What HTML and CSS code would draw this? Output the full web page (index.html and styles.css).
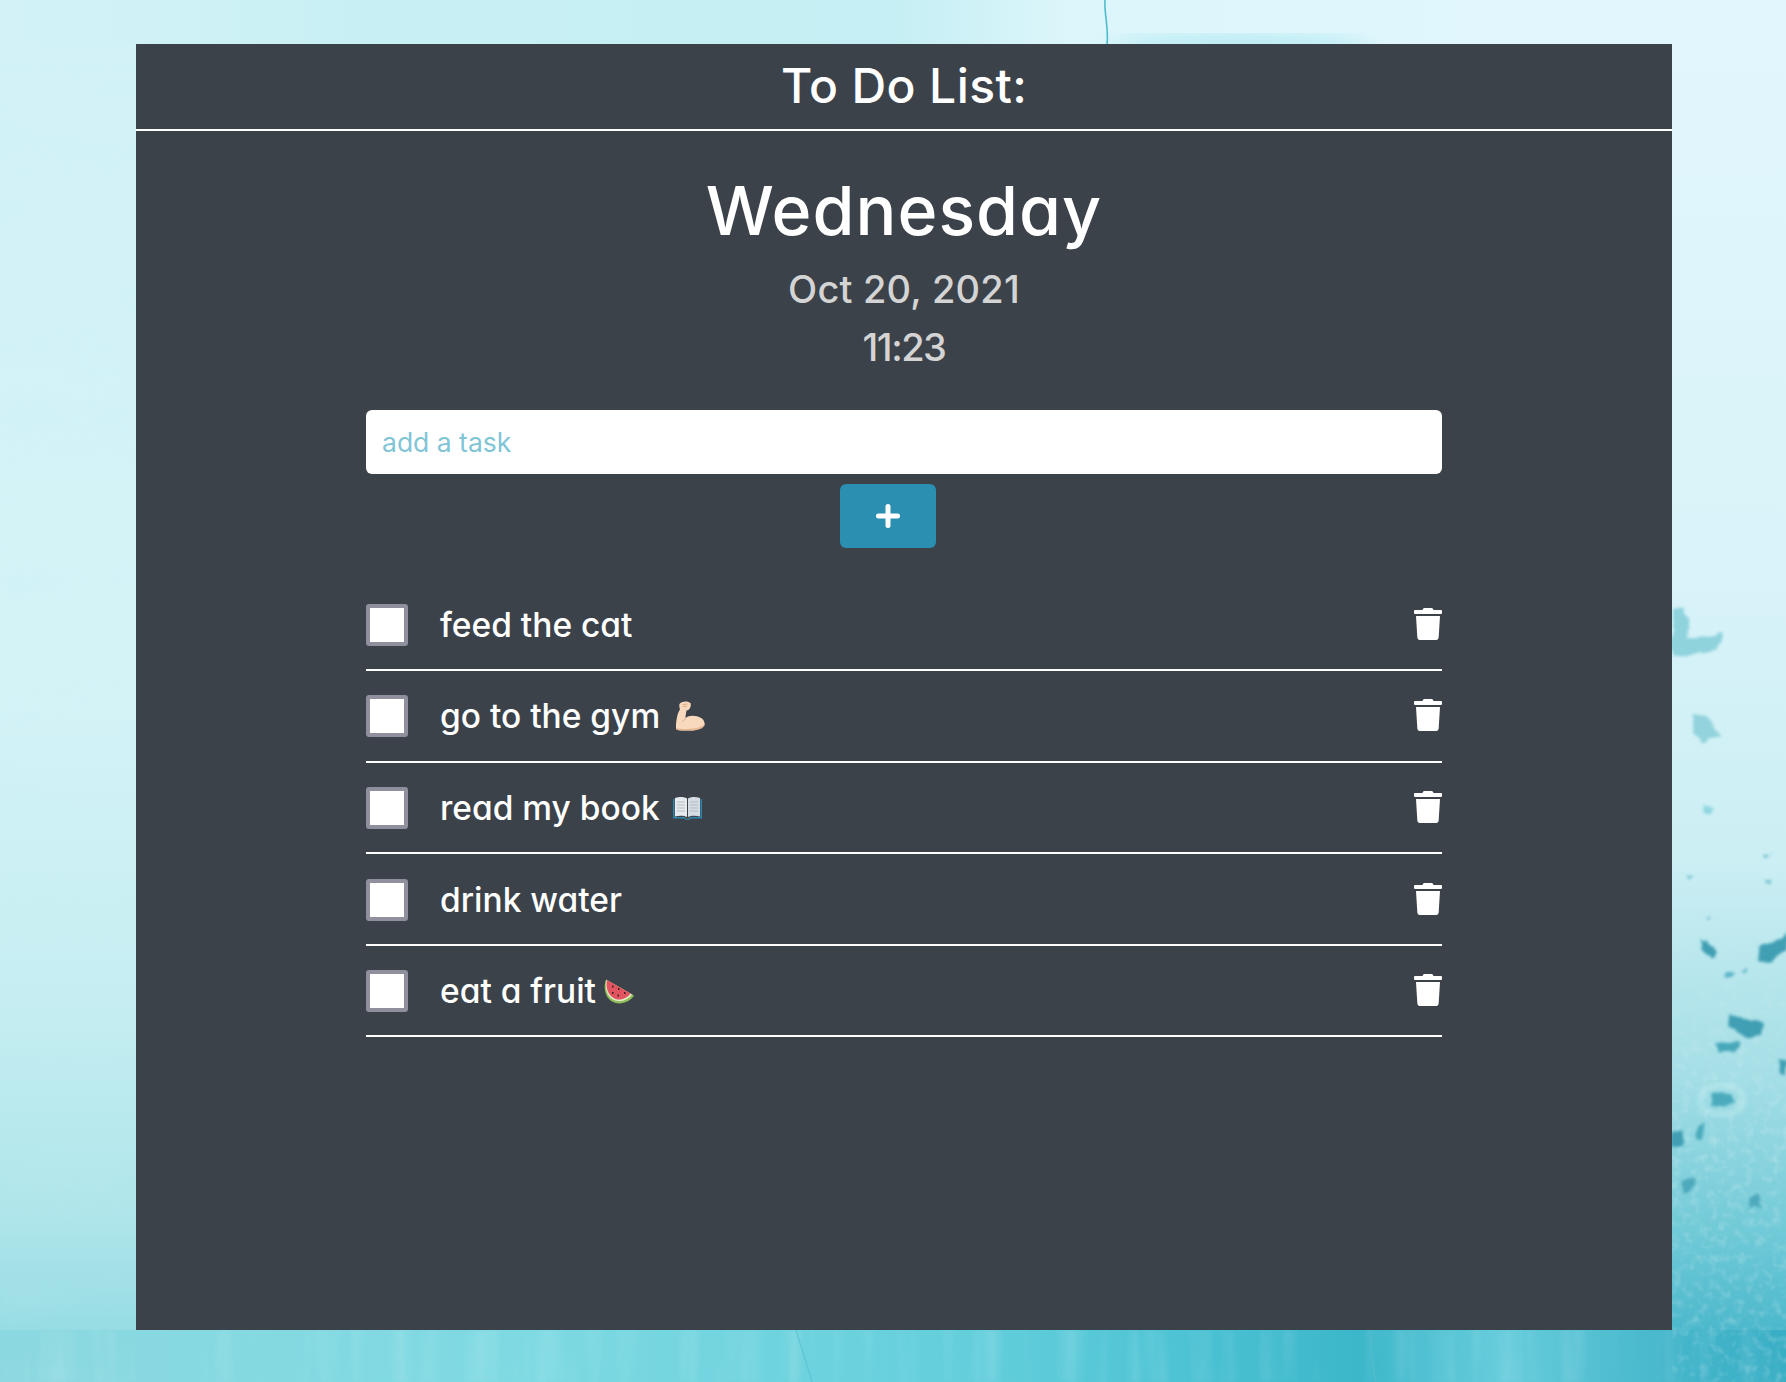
FILE: index.html
```html
<!DOCTYPE html>
<html lang="en">
<head>
<meta charset="utf-8">
<title>To Do List</title>
<link rel="stylesheet" href="styles.css">
</head>
<body>
<svg class="backdrop" viewBox="0 0 1786 1382" preserveAspectRatio="none" aria-hidden="true">
  <defs>
    <linearGradient id="base" x1="0" y1="0" x2="0" y2="1">
      <stop offset="0" stop-color="#d2f2f7"/>
      <stop offset="0.5" stop-color="#d4f3f7"/>
      <stop offset="0.72" stop-color="#c6eef2"/>
      <stop offset="0.88" stop-color="#aee5ea"/>
      <stop offset="1" stop-color="#8cd8e0"/>
    </linearGradient>
    <linearGradient id="rightFade" x1="0" y1="0" x2="0" y2="1">
      <stop offset="0" stop-color="#e2f7fd"/>
      <stop offset="0.42" stop-color="#d8f3f9"/>
      <stop offset="0.62" stop-color="#cceff4"/>
      <stop offset="0.78" stop-color="#a4dee6"/>
      <stop offset="0.9" stop-color="#6cc8d6"/>
      <stop offset="1" stop-color="#38aec5"/>
    </linearGradient>
    <linearGradient id="bottomBand" x1="0" y1="0" x2="1" y2="0">
      <stop offset="0" stop-color="#8cd8e0"/>
      <stop offset="0.3" stop-color="#7dd9e2"/>
      <stop offset="0.55" stop-color="#63cedb"/>
      <stop offset="0.66" stop-color="#4dc3d4"/>
      <stop offset="0.76" stop-color="#3cb6ca"/>
      <stop offset="0.84" stop-color="#66ccdb"/>
      <stop offset="0.936" stop-color="#45b6cb"/>
      <stop offset="1" stop-color="#38aec5"/>
    </linearGradient>
    <linearGradient id="topBand" x1="0" y1="0" x2="1" y2="0">
      <stop offset="0" stop-color="#d2f2f7"/>
      <stop offset="0.08" stop-color="#d0f2f6"/>
      <stop offset="0.2" stop-color="#c8f0f4"/>
      <stop offset="0.5" stop-color="#c5eff4"/>
      <stop offset="0.6" stop-color="#dcf6fb"/>
      <stop offset="0.936" stop-color="#e2f7fd"/>
      <stop offset="1" stop-color="#e2f7fd"/>
    </linearGradient>
    <linearGradient id="fadeUp" x1="0" y1="0" x2="0" y2="1">
      <stop offset="0" stop-color="#000"/>
      <stop offset="0.5" stop-color="#fff"/>
      <stop offset="1" stop-color="#fff"/>
    </linearGradient>
    <mask id="fadeMaskRight" maskUnits="userSpaceOnUse" x="1672" y="900" width="114" height="482">
      <rect x="1672" y="900" width="114" height="482" fill="url(#fadeUp)"/>
    </mask>
    <filter id="rough" x="-10%" y="-10%" width="120%" height="120%">
      <feTurbulence type="fractalNoise" baseFrequency="0.06" numOctaves="3" seed="4" result="n"/>
      <feDisplacementMap in="SourceGraphic" in2="n" scale="9" xChannelSelector="R" yChannelSelector="G"/>
      <feGaussianBlur stdDeviation="1.6"/>
    </filter>
    <filter id="streaksV" x="0" y="0" width="100%" height="100%">
      <feTurbulence type="fractalNoise" baseFrequency="0.05 0.004" numOctaves="3" seed="8"/>
      <feColorMatrix values="0 0 0 0 1  0 0 0 0 1  0 0 0 0 1  1.4 0 0 0 -0.6"/>
      <feGaussianBlur stdDeviation="1.5"/>
    </filter>
    <filter id="patchesH" x="0" y="0" width="100%" height="100%">
      <feTurbulence type="fractalNoise" baseFrequency="0.004 0.018" numOctaves="3" seed="12"/>
      <feColorMatrix values="0 0 0 0 0.55  0 0 0 0 0.86  0 0 0 0 0.9  1.4 0 0 0 -0.6"/>
      <feGaussianBlur stdDeviation="3"/>
    </filter>
    <filter id="speckle" x="0" y="0" width="100%" height="100%">
      <feTurbulence type="fractalNoise" baseFrequency="0.11" numOctaves="2" seed="3"/>
      <feColorMatrix values="0 0 0 0 1  0 0 0 0 1  0 0 0 0 1  2.4 0 0 0 -1.1"/>
      <feGaussianBlur stdDeviation="0.7"/>
    </filter>
    <filter id="soft"><feGaussianBlur stdDeviation="12"/></filter>
    <filter id="softer"><feGaussianBlur stdDeviation="2"/></filter>
  </defs>
  <rect width="136" height="1382" fill="url(#base)"/>
  <rect x="1672" width="114" height="1382" fill="url(#rightFade)"/>
  <rect x="0" y="0" width="1786" height="44" fill="url(#topBand)"/>
  <rect x="0" y="1330" width="1786" height="52" fill="url(#bottomBand)"/>
  <rect y="60" width="136" height="1322" filter="url(#patchesH)" opacity="0.22"/>
  <rect x="0" y="1330" width="1786" height="52" filter="url(#streaksV)" opacity="0.22"/>
  <g mask="url(#fadeMaskRight)"><rect x="1672" y="900" width="114" height="482" filter="url(#speckle)" opacity="0.2"/></g>
  <ellipse cx="1240" cy="50" rx="130" ry="14" fill="#a3e4ee" opacity="0.7" filter="url(#soft)"/>
  <path class="crack" d="M1105 0 C1104 14 1109 28 1107 44"/>
  <path class="crack" d="M1370 1330 C1371 1348 1372 1365 1376 1382"/>
  <path class="crack crack-faint" d="M796 1330 C802 1350 808 1368 812 1382"/>
  <g filter="url(#rough)">
    <path fill="#8fd3dd" d="M1672 610 L1684 608 L1690 638 L1722 634 L1716 650 L1690 656 L1672 660Z"/>
    <path fill="#93d3dd" d="M1690 714 L1708 716 L1722 738 L1700 742 L1694 732Z"/>
    <path fill="#8fd6e0" d="M1705 805 L1716 808 L1712 814 L1704 812Z"/>
    <path fill="#3f9fb3" d="M1698 938 L1708 940 L1717 952 L1714 960 L1704 952Z"/>
    <path fill="#3f9fb3" d="M1762 946 L1786 934 L1786 950 L1770 962 L1760 960Z"/>
    <path fill="#3f9fb3" d="M1728 1014 L1744 1020 L1762 1024 L1760 1036 L1744 1038 L1730 1026Z"/>
    <path fill="#46a8ba" d="M1716 1044 L1740 1042 L1736 1052 L1720 1052Z"/>
    <path fill="#4aabbc" d="M1712 1094 L1730 1093 L1735 1102 L1720 1108 L1711 1104Z"/>
    <path fill="#3f9fb3" d="M1673 1130 L1682 1129 L1684 1145 L1673 1149Z"/>
    <path fill="#4aabbc" d="M1693 1134 L1704 1123 L1706 1132 L1696 1139Z"/>
    <path fill="#4ea9bc" d="M1680 1182 L1696 1179 L1694 1188 L1682 1191Z"/>
    <path fill="#4ea9bc" d="M1748 1198 L1758 1196 L1760 1206 L1750 1208Z"/>
    <path fill="#3f9fb3" d="M1778 1058 L1786 1060 L1786 1076 L1780 1072Z"/>
    <path fill="#5ab4c6" d="M1724 974 L1736 972 L1732 978 L1726 978Z"/>
    <path fill="#5ab4c6" d="M1738 970 L1746 966 L1746 972Z"/>
    <path fill="#7cc4d2" d="M1762 880 L1772 880 L1770 886Z"/>
    <path fill="#7cc4d2" d="M1684 874 L1692 876 L1688 880Z"/>
    <path fill="#6db9ca" d="M1706 918 L1712 918 L1710 922Z"/>
    <path fill="#6db9ca" d="M1764 854 L1772 854 L1768 858Z"/>
  </g>
  <ellipse cx="1722" cy="1100" rx="22" ry="15" fill="none" stroke="#c2ecf1" stroke-width="5" opacity="0.5" filter="url(#softer)"/>
</svg>

<main class="panel">
  <header class="panel-header">
    <h1 class="title">To Do List:</h1>
  </header>
  <section class="content">
    <h2 class="day">Wednesday</h2>
    <p class="stamp stamp-date">Oct 20, 2021</p>
    <p class="stamp stamp-time">11:23</p>

    <form class="add-form">
      <input class="task-input" type="text" placeholder="add a task">
      <button class="add-button" type="button">
        <svg class="plus" viewBox="0 0 24 24" aria-hidden="true"><path d="M12 2.500v19M2.500 12h19"/></svg>
      </button>
    </form>

    <ul class="tasks">
      <li class="task">
        <span class="check"></span>
        <span class="task-text">feed the cat</span>
        <svg class="trash" viewBox="0 0 448 512" aria-hidden="true"><use href="#trash-shape"/></svg>
      </li>
      <li class="task">
        <span class="check"></span>
        <span class="task-text">go to the gym</span>
        <svg class="emoji emoji-arm" viewBox="0 0 30 30" aria-hidden="true">
          <path fill="#f8d9bd" d="M3.500 3C5 0 12-.5 14.500 2C15.500 5 14 9 10.500 9.500C10 12 9.500 15 9.500 17C13 14 20 14 25 17C29 19 29.500 24 27 26C24 29 16 30 8 29.500C4 29.500 1 29.500 0 28C-.5 24 1 12 4 8.500C3.500 7 3 5 3.500 3Z"/>
          <path fill="#e6b793" d="M.3 27C6 28.500 18 28.500 25 25.500C27 24.500 28.500 23.500 29 22C29 24 28.300 25 27 26C24 29 16 30 8 29.500C4 29.500 1 29.500 0 28Z"/>
          <path fill="none" stroke="#d9a67f" stroke-width=".9" d="M6.500 3.500L11.500 3M7 5.500L11 5.200M9.500 17.500C8.500 19 7.500 20 6.500 20.500"/>
        </svg>
        <svg class="trash" viewBox="0 0 448 512" aria-hidden="true"><use href="#trash-shape"/></svg>
      </li>
      <li class="task">
        <span class="check"></span>
        <span class="task-text">read my book</span>
        <svg class="emoji emoji-book" viewBox="0 0 29 24" aria-hidden="true">
          <path fill="#2f86ad" d="M0 3H1.500V21H12L14.500 23.500L17 21H27.500V3H29V22.500H17.500L16 24H13L11.500 22.500H0Z"/>
          <path fill="#e6ebef" d="M2 2C6 .5 11 .5 14 2.500V21C11 19.500 6 19.500 2 20.500Z"/>
          <path fill="#d5dce2" d="M27 2C23 .5 18 .5 15 2.500V21C18 19.500 23 19.500 27 20.500Z"/>
          <path fill="none" stroke="#aab4bd" stroke-width=".8" d="M4 6H12M4 9H12M4 12H12M4 15H12M17 6H25M17 9H25M17 12H25M17 15H25"/>
          <path fill="#5d4a33" d="M13 21.500H16V23H13Z"/>
        </svg>
        <svg class="trash" viewBox="0 0 448 512" aria-hidden="true"><use href="#trash-shape"/></svg>
      </li>
      <li class="task">
        <span class="check"></span>
        <span class="task-text">drink water</span>
        <svg class="trash" viewBox="0 0 448 512" aria-hidden="true"><use href="#trash-shape"/></svg>
      </li>
      <li class="task">
        <span class="check"></span>
        <span class="task-text">eat a fruit</span>
        <svg class="emoji emoji-melon" viewBox="0 0 31 25" aria-hidden="true">
          <path fill="#8fbd5a" d="M3 0.500L31 16.500C27 23 17 27 9 22.500C2 18.500 0 8 3 0.500Z"/>
          <path fill="#e4ecc8" d="M3.500 1L29 15.500C25 21 17 24.500 10 20.500C3.500 17 1.500 8 3.500 1Z"/>
          <path fill="#e2545f" d="M4 1L27.500 14.500C24 19.500 16.500 22.500 10.500 19C4.500 15.500 2.500 8 4 1Z"/>
          <path fill="#402124" d="M9 6.500h1.500v2H9zM15 9h1.500v2H15zM21 13h1.500v2H21zM9 13h1.500v2H9zM14.500 15.500H16v2h-1.500z"/>
        </svg>
        <svg class="trash" viewBox="0 0 448 512" aria-hidden="true"><use href="#trash-shape"/></svg>
      </li>
    </ul>
  </section>
</main>
<svg class="sprite" aria-hidden="true"><symbol id="trash-shape" viewBox="0 0 448 512"><path d="M432 32H312l-9.400-18.700A24 24 0 0 0 281.100 0H166.800a23.720 23.720 0 0 0-21.400 13.300L136 32H16A16 16 0 0 0 0 48v32a16 16 0 0 0 16 16h416a16 16 0 0 0 16-16V48a16 16 0 0 0-16-16zM53.200 467a48 48 0 0 0 47.900 45h245.800a48 48 0 0 0 47.900-45L416 128H32z"/></symbol></svg>
</body>
</html>
```
FILE: styles.css
```css
html, body { margin: 0; height: 100%; }
body {
  padding-top: 44px;
  box-sizing: border-box;
  background: #c8eef3;
  font-family: "Inter", "Liberation Sans", sans-serif;
  font-feature-settings: "cv11";
  color: #fff;
  overflow: hidden;
}
.backdrop { position: fixed; inset: 0; width: 100%; height: 100%; z-index: -1; }
.crack { fill: none; stroke: #4fbccb; stroke-width: 1.6; }
.crack-faint { stroke: #58c0cf; opacity: .6; }
.sprite { position: absolute; width: 0; height: 0; }

.panel {
  width: 1536px;
  height: 1286px;
  margin-left: 136px;
  background: #3c424a;
}
.panel-header {
  box-sizing: content-box;
  height: 83px;
  padding-bottom: 2px;
  border-bottom: 2px solid #fff;
  display: flex;
  align-items: center;
  justify-content: center;
}
.title { margin: 0; font-size: 48px; font-weight: 500; letter-spacing: 0.4px; }
.content { width: 1076px; margin: 0 auto; padding-top: 32px; text-align: center; }
.day { margin: 0; font-size: 68px; line-height: 94px; font-weight: 500; letter-spacing: 1px; }
.stamp { margin: 0; font-size: 38px; line-height: 58px; font-weight: 500; color: #d4d4d4; }
.stamp-date { margin-top: 3px; letter-spacing: 0.2px; }
.stamp-time { letter-spacing: -1.5px; }

.add-form { margin-top: 34px; display: flex; flex-direction: column; }
.task-input {
  box-sizing: border-box;
  width: 100%;
  height: 64px;
  border: 0;
  border-radius: 6px;
  padding: 0 16px;
  background: #fff;
  font-family: "Inter", "Liberation Sans", sans-serif;
  font-feature-settings: normal;
  font-size: 26.5px;
  outline: none;
}
.task-input::placeholder { color: #80c5d6; opacity: 1; }
.add-button {
  width: 96px;
  height: 64px;
  margin-top: 10px;
  margin-left: 474px;
  border: 0;
  border-radius: 6px;
  padding: 0;
  background: #2a8fb0;
  display: flex;
  align-items: center;
  justify-content: center;
}
.plus { width: 24px; height: 24px; fill: none; stroke: #fff; stroke-width: 5; stroke-linecap: round; }

.tasks { list-style: none; margin: 31.5px 0 0; padding: 0; }
.task {
  box-sizing: border-box;
  height: 91.6px;
  padding-top: 1px;
  border-bottom: 2px solid #fff;
  display: flex;
  align-items: center;
  text-align: left;
}
.check {
  box-sizing: border-box;
  width: 42px;
  height: 42px;
  border: 4px solid #8f8f9d;
  border-radius: 3px;
  background: #fff;
  margin-right: 32px;
  flex: none;
}
.task-text { font-size: 33.5px; font-weight: 500; }
.emoji { flex: none; }
.emoji-arm { width: 30px; height: 30px; margin-left: 16px; }
.emoji-book { width: 29px; height: 24px; margin-left: 13px; }
.emoji-melon { width: 31px; height: 25px; margin-left: 7px; }
.trash { width: 28px; height: 32px; margin-left: auto; margin-bottom: 2px; fill: #fff; flex: none; }
```
